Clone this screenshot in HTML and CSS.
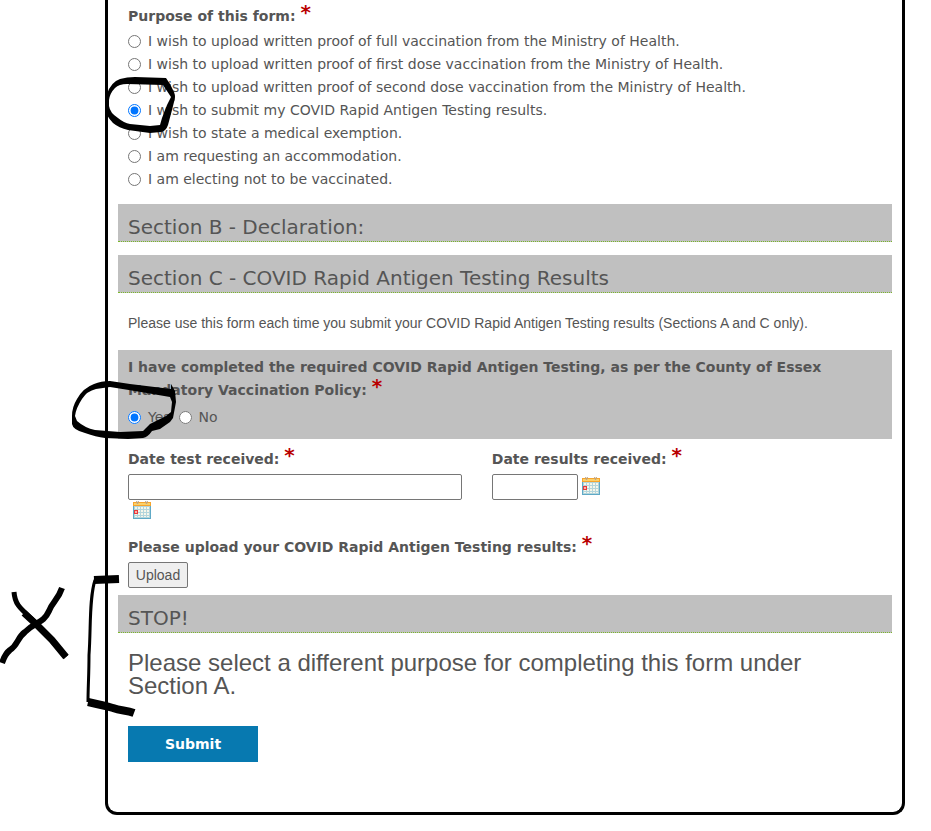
FILE: index.html
```html
<!DOCTYPE html>
<html lang="en">
  <head>
    <meta charset="UTF-8" />
    <meta name="viewport" content="width=device-width, initial-scale=1.0" />
    <title>COVID Rapid Antigen Testing Results</title>
    <link rel="stylesheet" href="styles.css">
  </head>
  <body>
    <svg width="0" height="0" class="defs" aria-hidden="true">
      <symbol id="calendar" viewBox="0 0 18 18">
        <rect x="0" y="1" width="18" height="17" fill="#5fa9c6" />
        <rect x="0" y="1" width="18" height="4" fill="#f7a42c" />
        <rect x="1" y="2" width="16" height="2" fill="#fbd069" />
        <rect x="1" y="5" width="16" height="12" fill="#b3d5dc" />
        <path d="M2 6h14v2h-14zM2 9h14v2h-14zM2 12h14v2h-14zM2 15h14v1h-14z" fill="#f6f6ea" />
        <path d="M4.500 6v10M7.500 6v10M10.500 6v10M13.500 6v10" stroke="#b3d5dc" />
        <rect x="1.500" y="9.500" width="3" height="3" fill="#f9b5a8" stroke="#e8383c" />
        <path d="M3.500 0l1 3 1-3M12.500 0l1 3 1-3" stroke="#b9a58a" fill="none" />
      </symbol>
    </svg>
    <div class="page">
      <form class="card">
        <fieldset class="field">
          <legend>Purpose of this form: <span class="required">*</span></legend>
          <div class="option">
            <input type="radio" name="purpose" id="p1" />
            <label for="p1">I wish to upload written proof of full vaccination from the Ministry of Health.</label>
          </div>
          <div class="option">
            <input type="radio" name="purpose" id="p2" />
            <label for="p2">I wish to upload written proof of first dose vaccination from the Ministry of Health.</label>
          </div>
          <div class="option">
            <input type="radio" name="purpose" id="p3" />
            <label for="p3">I wish to upload written proof of second dose vaccination from the Ministry of Health.</label>
          </div>
          <div class="option">
            <input type="radio" name="purpose" id="p4" checked />
            <label for="p4">I wish to submit my COVID Rapid Antigen Testing results.</label>
          </div>
          <div class="option">
            <input type="radio" name="purpose" id="p5" />
            <label for="p5">I wish to state a medical exemption.</label>
          </div>
          <div class="option">
            <input type="radio" name="purpose" id="p6" />
            <label for="p6">I am requesting an accommodation.</label>
          </div>
          <div class="option">
            <input type="radio" name="purpose" id="p7" />
            <label for="p7">I am electing not to be vaccinated.</label>
          </div>
        </fieldset>

        <h2 class="section">Section B - Declaration:</h2>
        <h2 class="section">Section C - COVID Rapid Antigen Testing Results</h2>
        <p class="note">Please use this form each time you submit your COVID Rapid Antigen Testing results (Sections A and C only).</p>

        <fieldset class="field shaded">
          <legend>I have completed the required COVID Rapid Antigen Testing, as per the County of Essex Mandatory Vaccination Policy: <span class="required">*</span></legend>
          <div class="inline">
            <div class="option">
              <input type="radio" name="completed" id="yes" checked />
              <label for="yes">Yes</label>
            </div>
            <div class="option">
              <input type="radio" name="completed" id="no" />
              <label for="no">No</label>
            </div>
          </div>
        </fieldset>

        <div class="dates">
          <div class="date wide">
            <label for="tested">Date test received: <span class="required">*</span></label>
            <input type="text" id="tested" />
            <a href="#" class="picker" aria-label="Pick a date"><svg><use href="#calendar" /></svg></a>
          </div>
          <div class="date">
            <label for="received">Date results received: <span class="required">*</span></label>
            <input type="text" id="received" />
            <a href="#" class="picker" aria-label="Pick a date"><svg><use href="#calendar" /></svg></a>
          </div>
        </div>

        <div class="upload">
          <label for="upload">Please upload your COVID Rapid Antigen Testing results: <span class="required">*</span></label>
          <button type="button" id="upload">Upload</button>
        </div>

        <h2 class="section">STOP!</h2>
        <p class="stop">Please select a different purpose for completing this form under Section A.</p>
        <button type="submit" class="submit">Submit</button>
      </form>

      <!-- hand-drawn marks over the form -->
      <svg class="marks" viewBox="0 0 210 730" aria-hidden="true">
        <path fill-rule="evenodd" d="M107 94Q111 82 120 79Q127 77 135 77L166 78L170 84L174 92Q176 97 174 102L172 110L168 125Q166 131 161 132L150 133L128 130Q119 128 113 123Q106 116 105 108ZM109 100Q110 93 115 88Q119 84 127 84L163 85L171 97L167 105L162 118L160 125L150 126L130 124Q124 123 118 118Q110 113 109 106Z" />
        <path fill-rule="evenodd" d="M72 416Q72 407 77 399Q83 388 94 384Q101 381 110 381L130 384L171 389L171 384L175 391L176 402L173 418L170 422L160 429L152 431Q148 437 143 438L128 439L105 438Q96 437 85 433Q73 430 72 424ZM75 416Q76 408 82 399Q87 391 96 389L110 387L135 391L170 397L172 402L171 412L166 416L150 424L143 431L120 432L95 430Q85 428 77 421Z" />
        <g fill="none" stroke="#000" stroke-linejoin="round">
          <path d="M14 592C15 605 20 608 35 622C45 632 54 643 66 657" stroke-width="5" />
          <path d="M24 613L37 625L52 640L66 657" stroke-width="7" />
          <path d="M62 588C58 600 53 601 49 611C43 624 36 621 25 632C17 638 18 645 10 650C6 653 4 657 2 663" stroke-width="6" />
          <path d="M119 579L94 580" stroke-width="8" />
          <path d="M95 580C89 599 91 628 89 655C89 675 88 687 88 702" stroke-width="3" />
          <path d="M88 702C102 705 106 706 113 708C121 711 126 710 134 713" stroke-width="8" />
        </g>
      </svg>
    </div>
  </body>
</html>
```
FILE: styles.css
```css
* {
  box-sizing: border-box;
}
body {
  margin: 0;
  background-color: #fff;
  color: #555;
  font-family: Verdana, "DejaVu Sans", sans-serif;
  font-size: 14px;
  line-height: 23px;
}
.defs {
  position: absolute;
}
.page {
  position: relative;
  padding: 0 26px 16px 105px;
}
.card {
  max-width: 800px;
  padding: 5px 10px 50px;
  border: 3px solid #000;
  border-top: 0;
  border-radius: 0 0 12px 12px;
}
.field {
  margin: 0;
  padding: 0 10px;
  border: 0;
}
legend,
.date label,
.upload label {
  display: block;
  padding: 0;
  font-weight: bold;
}
legend {
  margin-bottom: 2px;
}
.required {
  color: #b90000;
  font-size: 20px;
  line-height: 1px;
  vertical-align: 2px;
}
.option {
  display: flex;
  align-items: center;
}
.option input {
  width: 13px;
  height: 13px;
  margin: 0 7px 0 0;
}
.section {
  height: 38px;
  margin: 13px 0 0;
  padding: 12px 10px 0;
  border-bottom: 1px dotted #7ab829;
  background-color: #c0c0c0;
  font-size: 20px;
  font-weight: normal;
}
.note {
  margin: 0;
  padding: 19px 10px 15px;
  font-family: Arial, "Liberation Sans", sans-serif;
}
.shaded {
  padding: 6px 10px 10px;
  background-color: #c0c0c0;
}
.shaded legend {
  float: left;
  width: 100%;
  margin-bottom: 4px;
}
.inline {
  display: flex;
  clear: both;
  gap: 8px;
}
.dates {
  display: grid;
  grid-template-columns: 47% 53%;
  padding-top: 9px;
}
.date {
  padding: 0 20px 0 10px;
}
.date input {
  width: 86px;
  height: 26px;
  margin: 3px 0 0;
  border: 1px solid #767676;
  border-radius: 2px;
  vertical-align: top;
}
.wide input {
  width: 100%;
}
.picker {
  display: inline-block;
  height: 23px;
  margin-top: 6px;
  vertical-align: top;
}
.wide .picker {
  margin: 1px 0 0 5px;
}
.picker svg {
  display: block;
  width: 18px;
  height: 18px;
}
.upload {
  padding: 12px 10px 0;
}
.upload button {
  display: block;
  width: 60px;
  height: 26px;
  margin: 3px 0 0;
  padding: 0;
  border: 1px solid #767676;
  border-radius: 2px;
  background-color: #efefef;
  color: #555;
  font: 14px Arial, "Liberation Sans", sans-serif;
}
.upload + .section {
  margin-top: 7px;
}
.stop {
  margin: 0;
  padding: 18px 10px 29px;
  font-family: Arial, "Liberation Sans", sans-serif;
  font-size: 24px;
}
.submit {
  width: 130px;
  height: 36px;
  margin-left: 10px;
  border: 0;
  background-color: #0779b0;
  color: #fff;
  font: bold 14px Verdana, "DejaVu Sans", sans-serif;
}
.marks {
  position: absolute;
  top: 0;
  left: 0;
  width: 210px;
  height: 730px;
  pointer-events: none;
}
```
